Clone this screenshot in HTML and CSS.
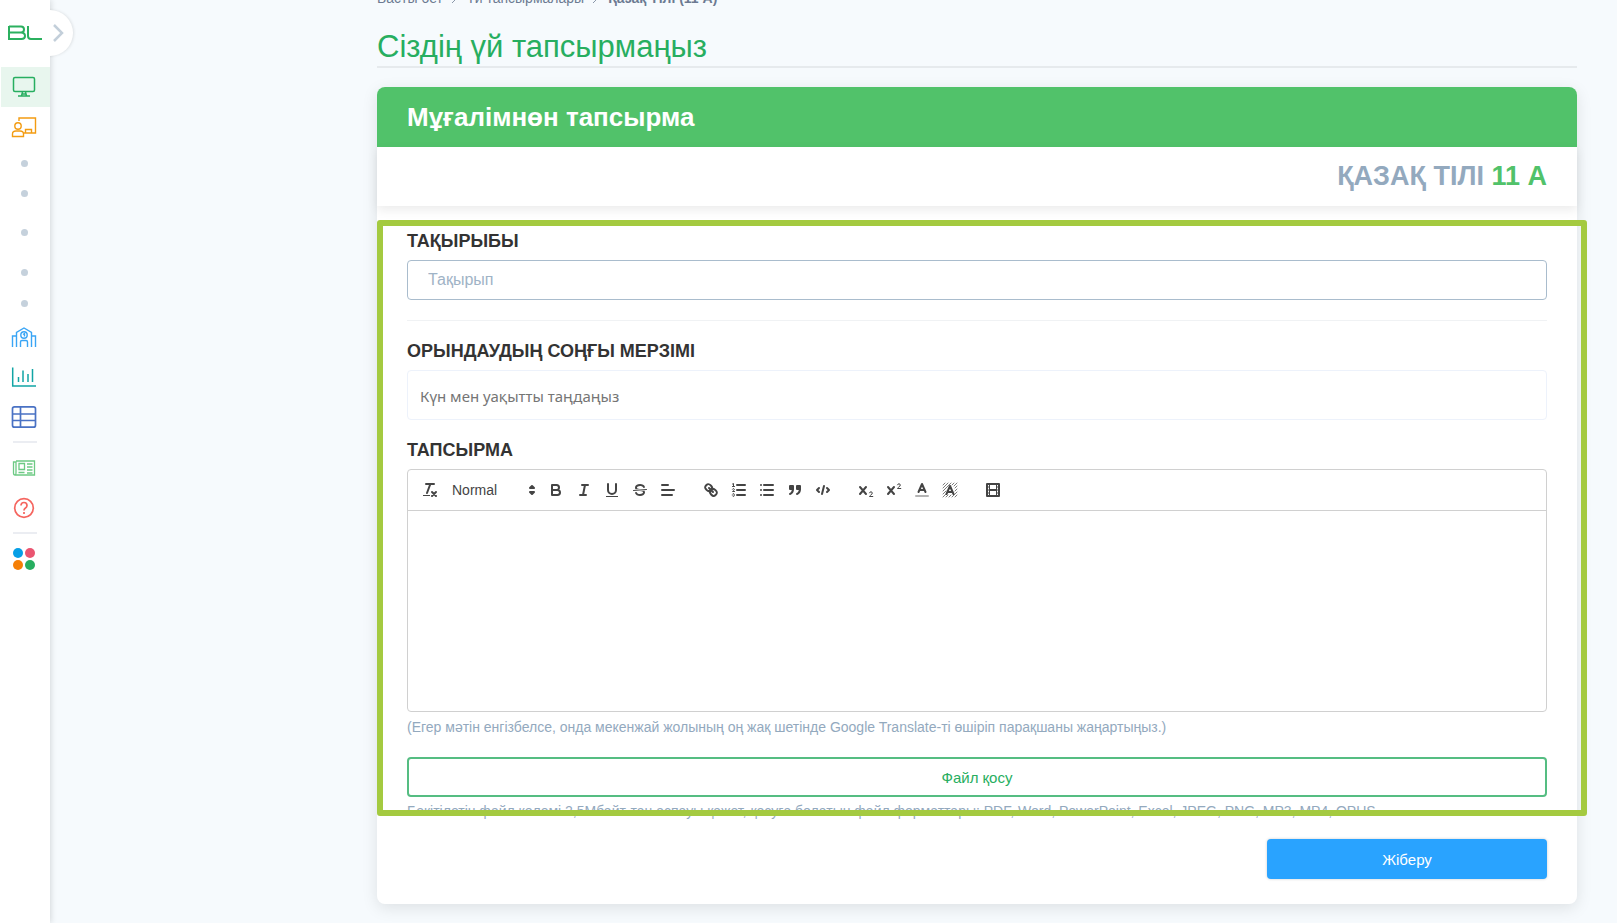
FILE: index.html
```
<!DOCTYPE html>
<html lang="kk">
<head>
    <meta charset="UTF-8">
    <meta name="viewport" content="width=device-width, initial-scale=1.0">
    <title>Сіздің үй тапсырмаңыз</title>
    <link rel="stylesheet" href="styles.css">
</head>
<body>
    <aside class="sidebar">
        <a class="logo" href="#" aria-label="BL">
            <svg width="34" height="16" viewBox="0 0 34 16" fill="none" stroke="#2bb05f" stroke-width="2">
                <path d="M1 1.500H13Q16 1.500 16 4.500Q16 7.500 13 7.500H1M13 7.500Q17 7.500 17 11Q17 14 13.500 14H1V1"/>
                <path d="M20 1V11Q20 14 23 14H34"/>
            </svg>
        </a>
        <button class="toggle" type="button" aria-label="Мәзірді ашу">
            <svg width="12" height="18" viewBox="0 0 12 18" fill="none" stroke="#c3cfda" stroke-width="2.500"><path d="M2 1L10 9L2 17"/></svg>
        </button>
        <nav class="menu">
            <a class="item active" href="#" aria-label="Басты бет">
                <svg width="24" height="22" viewBox="0 0 24 22" fill="none" stroke="#27ae60" stroke-width="1.500"><rect x="1.500" y="1.500" width="21" height="14" rx="1.500"/><path d="M10.500 16L9.500 20M13.500 16L14.500 20M6 20H18M10 18H14"/></svg>
            </a>
            <a class="item" href="#" aria-label="Мұғалім">
                <svg width="26" height="22" viewBox="0 0 26 22" fill="none" stroke="#f39c12" stroke-width="1.400"><path d="M8 5V2H24.500V17H13M14.500 17V13.500H20.500V17"/><circle cx="7" cy="10" r="3.200"/><path d="M1.500 20.500V18Q1.500 15 5 15H9Q12.500 15 12.500 18V20.500Z"/></svg>
            </a>
            <a class="dot" href="#" aria-label="Сабақтар"></a>
            <a class="dot" href="#" aria-label="Күнделік"></a>
            <a class="dot tall" href="#" aria-label="Үй тапсырмалары"></a>
            <a class="dot tall" href="#" aria-label="Бағалар"></a>
            <a class="dot" href="#" aria-label="Кесте"></a>
            <a class="item" href="#" aria-label="Мектеп">
                <svg width="26" height="22" viewBox="0 0 26 22" fill="none" stroke="#3aa5f5" stroke-width="1.400"><path d="M1.500 21V10H5.500M5.500 21V6.500L13 2L20.500 6.500V21M20.500 10H24.500V21M9.500 21V16Q9.500 14.500 11 14.500H15Q16.500 14.500 16.500 16V21"/><circle cx="13" cy="9" r="3.200"/><path d="M12 8.500L13.500 7.500V10.500"/></svg>
            </a>
            <a class="item" href="#" aria-label="Статистика">
                <svg width="26" height="22" viewBox="0 0 26 22" fill="none" stroke="#12a5a5" stroke-width="1.500"><path d="M1.700 1.500V20H25M7.500 11V16M12 4.500V16M17 8V16M21.500 3V16"/></svg>
            </a>
            <a class="item" href="#" aria-label="Журнал">
                <svg width="26" height="24" viewBox="0 0 26 24" fill="none" stroke="#4a72c4" stroke-width="1.700"><rect x="1.500" y="1.800" width="23" height="20.400" rx="2"/><path d="M9.500 2V22M1.500 9H24.500M1.500 15.500H24.500"/></svg>
            </a>
            <span class="divider"></span>
            <a class="item" href="#" aria-label="Жаңалықтар">
                <svg width="24" height="18" viewBox="0 0 24 18" fill="none" stroke="#6dca84" stroke-width="1.300"><path d="M4 2H22.500V16H3Q1.500 16 1.500 14V3H4V14Q4 16 3 16M7 4.500H12.500V10.500H7ZM15 5H20.500M15 8H20.500M15 11H20.500M15 14H20.500M6.500 13.500H12.500"/></svg>
            </a>
            <a class="item" href="#" aria-label="Көмек">
                <svg width="22" height="22" viewBox="0 0 22 22" fill="none" stroke="#f5655f" stroke-width="1.700"><circle cx="11" cy="11" r="9.300"/><path d="M8 8.500Q8 5.500 11 5.500T14 8.500Q14 10 12.500 11Q11 12 11 13.500M11 15V17"/></svg>
            </a>
            <span class="divider"></span>
            <a class="item" href="#" aria-label="Қосымшалар">
                <svg width="24" height="24" viewBox="0 0 24 24"><circle cx="6" cy="6" r="5" fill="#069fe6"/><circle cx="18" cy="6" r="5" fill="#ea5571"/><circle cx="6" cy="18" r="5" fill="#f57f06"/><circle cx="18" cy="18" r="5" fill="#27ae60"/></svg>
            </a>
        </nav>
    </aside>

    <main class="main">
        <nav class="breadcrumbs">
            <a href="#">Басты бет</a>
            <svg width="8" height="10" viewBox="0 0 8 10"><path d="M1 0L6 5L1 10"/></svg>
            <a href="#">Үй тапсырмалары</a>
            <svg width="8" height="10" viewBox="0 0 8 10"><path d="M1 0L6 5L1 10"/></svg>
            <b>Қазақ Тілі (11 А)</b>
        </nav>
        <h1 class="title">Сіздің үй тапсырмаңыз</h1>

        <section class="card">
            <h2 class="card-header">Мұғалімнөн тапсырма</h2>
            <div class="subject">ҚАЗАҚ ТІЛІ <span class="class-name">11 А</span></div>
            <form class="card-body">
                <label class="label" for="topic">ТАҚЫРЫБЫ</label>
                <input class="input" type="text" id="topic" placeholder="Тақырып">
                <hr class="line">
                <label class="label" for="deadline">ОРЫНДАУДЫҢ СОҢҒЫ МЕРЗІМІ</label>
                <input class="input date" type="text" id="deadline" placeholder="Күн мен уақытты таңдаңыз">
                <label class="label task" for="task">ТАПСЫРМА</label>
                <div class="editor">
                    <div class="toolbar">
                        <div class="group">
                            <button type="button" aria-label="Clean"><svg viewBox="0 0 18 18"><path d="M5 3H13M6 12L9.350 3M11 11L15 15M15 11L11 15"/><rect class="fill" x="2" y="14" width="7" height="1"/></svg></button>
                            <div class="picker">
                                <select aria-label="Format"><option>Normal</option><option>Heading 1</option><option>Heading 2</option></select>
                                <svg viewBox="0 0 18 18"><path class="both" d="M7 11L9 13L11 11ZM7 7L9 5L11 7Z"/></svg>
                            </div>
                            <button type="button" aria-label="Bold"><svg viewBox="0 0 18 18"><path d="M5 4H9.500A2.500 2.500 0 0 1 9.500 9H5ZM5 9H10.500A2.500 2.500 0 0 1 10.500 14H5Z"/></svg></button>
                            <button type="button" aria-label="Italic"><svg viewBox="0 0 18 18"><path d="M7 4H13M5 14H11M8 14L10 4"/></svg></button>
                            <button type="button" aria-label="Underline"><svg viewBox="0 0 18 18"><path d="M5 3V9A4 4 0 0 0 13 9V3"/><rect class="fill" x="3" y="15" width="12" height="1"/></svg></button>
                            <button type="button" aria-label="Strike"><svg viewBox="0 0 18 18"><path class="thin" d="M15.500 8.500L2.500 9.500"/><path class="fill" d="M9.007,8C6.542,7.791,6,7.519,6,6.500,6,5.792,7.283,5,9,5c1.571,0,2.765.679,2.969,1.309a1,1,0,0,0,1.900-.617C13.356,4.106,11.354,3,9,3,6.200,3,4,4.538,4,6.500a3.200,3.200,0,0,0,.5,1.843Z"/><path class="fill" d="M8.984,10C11.457,10.208,12,10.479,12,11.500c0,0.708-1.283,1.500-3,1.500-1.571,0-2.765-.679-2.969-1.309a1,1,0,1,0-1.900.617C4.644,13.894,6.646,15,9,15c2.800,0,5-1.538,5-3.500a3.200,3.200,0,0,0-.5-1.843Z"/></svg></button>
                            <button type="button" aria-label="Align"><svg viewBox="0 0 18 18"><path d="M3 9H15M3 14H13M3 4H9"/></svg></button>
                        </div>
                        <div class="group">
                            <button type="button" aria-label="Link"><svg viewBox="0 0 18 18"><path d="M7 7L11 11M8.900,4.577a3.476,3.476,0,0,1,.36,4.679A3.476,3.476,0,0,1,4.577,8.900C3.185,7.500,2.035,6.400,4.217,4.217S7.500,3.185,8.900,4.577Z"/><path d="M13.423,9.100a3.476,3.476,0,0,0-4.679-.36,3.476,3.476,0,0,0,.36,4.679c1.392,1.392,2.500,2.542,4.679.36S14.815,10.500,13.423,9.100Z"/></svg></button>
                            <button type="button" aria-label="Ordered list"><svg viewBox="0 0 18 18"><path d="M7 4H15M7 9H15M7 14H15"/><path class="thin" d="M2.500 3L3.500 2.500V5.500M2.500 5.500H4.500M4.500 10.500H2.500C2.500 10.200 4.350 9.400 4.350 8.300A1 1 0 0 0 2.500 8.200M2.500 14.850A1 1 0 0 0 4.350 14.700Q4.350 14 3.750 14Q4.350 14 4.350 13.300A1 1 0 0 0 2.500 13.150"/></svg></button>
                            <button type="button" aria-label="Bullet list"><svg viewBox="0 0 18 18"><path d="M6 4H15M6 9H15M6 14H15M3 4H3M3 9H3M3 14H3"/></svg></button>
                            <button type="button" aria-label="Quote"><svg viewBox="0 0 18 18"><rect class="both" x="4" y="5" width="3" height="3"/><rect class="both" x="11" y="5" width="3" height="3"/><path class="both" d="M7 8C7 12 4 13 4 13"/><path class="both" d="M14 8C14 12 11 13 11 13"/></svg></button>
                            <button type="button" aria-label="Code"><svg viewBox="0 0 18 18"><path d="M5 7L3 9L5 11M13 7L15 9L13 11M10 5L8 13"/></svg></button>
                        </div>
                        <div class="group">
                            <button type="button" aria-label="Subscript"><svg viewBox="0 0 18 18"><path d="M3 6L9 13M9 6L3 13"/><path class="thin" d="M12.500 11.800Q12.800 10.800 14 10.800Q15.300 11 15.300 12Q15.300 13.200 13.500 14.300Q12.500 15 12.500 15.500H15.800"/></svg></button>
                            <button type="button" aria-label="Superscript"><svg viewBox="0 0 18 18"><path d="M3 6L9 13M9 6L3 13"/><path class="thin" d="M12.500 3.800Q12.800 2.800 14 2.800Q15.300 3 15.300 4Q15.300 5.200 13.500 6.300Q12.500 7 12.500 7.500H15.800"/></svg></button>
                            <button type="button" aria-label="Color"><svg viewBox="0 0 18 18"><path class="faded" d="M3 15H15"/><path d="M5.500 11L9 3L12.500 11M6.400 9H11.600"/></svg></button>
                            <button type="button" aria-label="Background"><svg viewBox="0 0 18 18"><path class="hatch" d="M2 4L4 2M2 7L7 2M2 10L10 2M2 13L5 10M2 16L5 13M5 16L7 14M8 16L10 14M11 16L16 11M14 16L16 14M11 4L13 2M13 5L16 2M14 7L16 5M14 10L16 8"/><path d="M5.500 13L9 5L12.500 13M6.400 11H11.600"/></svg></button>
                        </div>
                        <div class="group">
                            <button type="button" aria-label="Video"><svg viewBox="0 0 18 18"><rect x="3" y="3" width="12" height="12"/><path class="thin" d="M5.500 3V15M12.500 3V15M3 6H5M3 9H5M3 12H5M13 6H15M13 9H15M13 12H15"/><path d="M6 9H12"/></svg></button>
                        </div>
                    </div>
                    <textarea class="text" id="task"></textarea>
                </div>
                <p class="note">(Егер мәтін енгізбелсе, онда мекенжай жолының оң жақ шетінде Google Translate-ті өшіріп парақшаны жаңартыңыз.)</p>
                <button class="button add-file" type="button">Файл қосу</button>
                <p class="note formats">Бекітілетін файл көлемі 2,5Мбайт-тан аспауы қажет, қосуға болатын файл форматтары: PDF, Word, PowerPoint, Excel, JPEG, PNG, MP3, MP4, OPUS</p>
                <button class="button send" type="submit">Жіберу</button>
                <div class="highlight"></div>
            </form>
        </section>
    </main>
</body>
</html>
```
FILE: styles.css
```
* {
    box-sizing: border-box;
}
body {
    margin: 0;
    min-height: 100vh;
    display: flex;
    background: #f6fafd;
    font-family: "Liberation Sans", Arial, sans-serif;
    color: #333;
    overflow: hidden;
}
button, input, select, textarea {
    font-family: inherit;
    margin: 0;
}

/* sidebar */
.sidebar {
    position: relative;
    flex: 0 0 50px;
    background: #fff;
    box-shadow: 1px 0 6px rgba(0, 0, 0, 0.14);
}
.logo {
    position: relative;
    z-index: 1;
    display: flex;
    height: 67px;
    padding: 25px 0 0 8px;
}
.toggle {
    position: absolute;
    top: 10px;
    left: 27px;
    width: 46px;
    height: 46px;
    padding: 0 0 0 16px;
    display: flex;
    align-items: center;
    justify-content: center;
    border: none;
    border-radius: 50%;
    background: #fff;
    box-shadow: 1px 0 3px rgba(0, 0, 0, 0.1);
    clip-path: inset(-4px -4px -4px 23px);
    cursor: pointer;
}
.menu {
    display: flex;
    flex-direction: column;
}
.item {
    height: 40px;
    margin-left: 1px;
    padding-right: 3px;
    display: flex;
    align-items: center;
    justify-content: center;
}
.active {
    background: #e8f6ee;
}
.dot {
    height: 30px;
    display: flex;
    align-items: center;
    justify-content: center;
    padding: 3px 2px 0 0;
}
.dot.tall {
    height: 40px;
    padding-top: 10px;
}
.dot::before {
    content: "";
    width: 7px;
    height: 7px;
    border-radius: 50%;
    background: #c5d1dc;
}
.divider {
    height: 2px;
    margin: 4px 13px 5px;
    background: #ebedf2;
}

/* content */
.main {
    flex: 1;
    min-width: 0;
    padding: 0 40px 18px 327px;
}
.breadcrumbs {
    display: flex;
    align-items: center;
    gap: 8px;
    height: 20px;
    margin-top: -12px;
    font-size: 14px;
    color: #6c7a92;
}
.breadcrumbs a {
    color: inherit;
    text-decoration: none;
}
.breadcrumbs svg {
    fill: none;
    stroke: #8b98aa;
}
.title {
    margin: 0 0 19px;
    padding-top: 20px;
    border-bottom: 2px solid #e6eaed;
    font-size: 31px;
    line-height: 38px;
    font-weight: 400;
    color: #27ae60;
}
.card {
    border-radius: 8px;
    background: #fff;
    box-shadow: 0 4px 16px rgba(0, 0, 0, 0.1);
}
.card-header {
    margin: 0;
    padding: 0 30px;
    border-radius: 8px 8px 0 0;
    background: #51c26a;
    font-size: 26px;
    line-height: 60px;
    color: #fff;
}
.subject {
    padding: 0 30px;
    font-size: 27px;
    line-height: 59px;
    font-weight: bold;
    text-align: right;
    color: #93a9be;
    box-shadow: 0 4px 10px rgba(0, 0, 0, 0.08);
}
.class-name {
    color: #51c26a;
}
.card-body {
    position: relative;
    padding: 25px 30px;
}
.label {
    display: block;
    margin-bottom: 8px;
    font-size: 18px;
    line-height: 21px;
    font-weight: bold;
}
.input {
    display: block;
    width: 100%;
    height: 40px;
    padding: 0 20px;
    border: 1px solid #a9bccd;
    border-radius: 4px;
    background: #fff;
    font-size: 16px;
}
.input::placeholder {
    color: #9fb3c6;
}
.line {
    height: 1px;
    margin: 20px 0;
    border: none;
    background: #f0f2f4;
}
.date {
    height: 50px;
    padding: 2px 12px 0;
    border-color: #edf2fb;
    font-family: "Noto Sans", sans-serif;
    font-size: 15px;
}
.date::placeholder {
    color: #757575;
}
.task {
    margin-top: 20px;
}

/* editor */
.editor {
    border: 1px solid #d0d0d0;
    border-radius: 4px;
}
.toolbar {
    display: flex;
    gap: 15px;
    padding: 8px;
    border-bottom: 1px solid #d0d0d0;
}
.group {
    display: flex;
}
.toolbar button {
    width: 28px;
    height: 24px;
    padding: 3px 5px;
    border: none;
    background: none;
    cursor: pointer;
}
.toolbar svg {
    display: block;
    width: 18px;
    height: 18px;
    fill: none;
    stroke: #444;
    stroke-width: 2;
    stroke-linecap: round;
    stroke-linejoin: round;
}
.toolbar .fill {
    fill: #444;
    stroke: none;
}
.toolbar .both {
    fill: #444;
}
.toolbar .thin {
    stroke-width: 1;
}
.toolbar .hatch {
    stroke-width: 1;
    opacity: 0.7;
}
.toolbar .faded {
    opacity: 0.4;
}
.picker {
    position: relative;
    width: 98px;
}
.picker select {
    width: 100%;
    height: 24px;
    padding: 0 8px;
    border: none;
    background: none;
    appearance: none;
    font-size: 14px;
    color: #444;
}
.picker svg {
    position: absolute;
    top: 3px;
    right: 1px;
    pointer-events: none;
}
.text {
    display: block;
    width: 100%;
    height: 200px;
    padding: 12px 15px;
    border: none;
    background: none;
    outline: none;
    resize: none;
    font-size: 14px;
}
.note {
    margin: 5px 0 20px;
    font-size: 14px;
    line-height: 20px;
    color: #93a9be;
}
.formats {
    margin: 4px 0 18px;
}
.button {
    display: block;
    width: 100%;
    height: 40px;
    border: none;
    border-radius: 4px;
    font-size: 15px;
    cursor: pointer;
}
.add-file {
    border: 2px solid #55bd82;
    background: #fff;
    color: #27ae60;
}
.send {
    width: 280px;
    margin-left: auto;
    background: #29a3ff;
    color: #fff;
    box-shadow: 0 0 3px rgba(0, 0, 0, 0.2);
}
/* frame round the part to fill in */
.highlight {
    position: absolute;
    top: 14px;
    right: -10px;
    bottom: 88px;
    left: 0;
    border: 6px solid #a4ca40;
    border-radius: 3px;
    pointer-events: none;
}
```
